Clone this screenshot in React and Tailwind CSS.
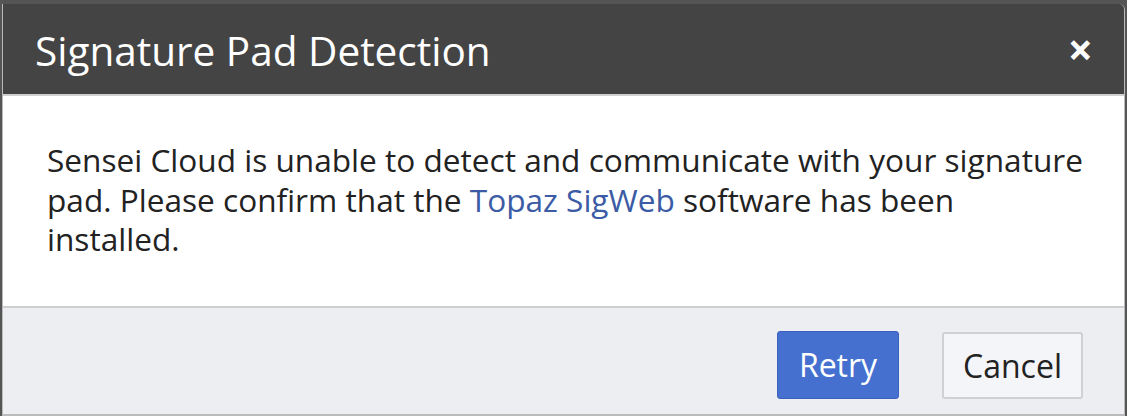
export default function App() {
  return (
    <div className="w-[1127px] h-[416px] bg-[#555] overflow-hidden" style={{ fontFamily: '"Open Sans", sans-serif' }}>
      <div className="mt-[4px] ml-[2px] w-[1123px] h-[412px] flex flex-col border-x border-[#bbb] rounded-tr-[6px] overflow-hidden">
        <div className="h-[92px] shrink-0 bg-[#444444] flex items-center justify-between pl-[32px] pr-[31px] pt-[4px] border-b-2 border-[#d0d0d0]">
          <h1 className="text-[40.5px] text-white leading-none">Signature Pad Detection</h1>
          <span className="text-white text-[44px] font-bold leading-none -mt-[4px]">×</span>
        </div>
        <div className="h-[210px] shrink-0 bg-white pl-[44px] pr-[38px] pt-[44px] text-[31.6px] leading-[39.5px] text-[#222]">
          Sensei Cloud is unable to detect and communicate with your signature pad. Please confirm that the <span className="text-[#3b5ba5]">Topaz SigWeb</span> software has been installed.
        </div>
        <div className="flex-1 bg-[#edeef2] border-t-2 border-[#cfcfcf] border-b-2 border-b-[#bbb] flex items-start justify-end pr-[41px] pt-[23px] gap-[43px]">
          <button className="h-[68px] w-[122px] rounded-[3px] bg-[#4570cf] border border-[#3a62bd] text-white text-[32px]">Retry</button>
          <button className="mt-[1px] h-[67px] w-[141px] rounded-[3px] bg-[#f4f5f8] border-2 border-[#cfd0d3] text-[#222] text-[32px]">Cancel</button>
        </div>
      </div>
    </div>
  );
}
